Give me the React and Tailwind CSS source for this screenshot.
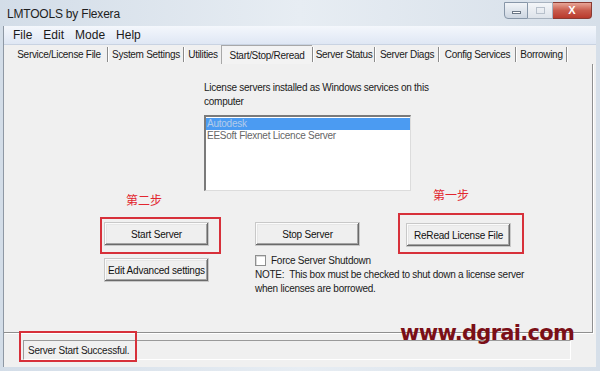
import React from 'react';

const TABS = [
  { label: 'Service/License File', w: 'w-[96px]' },
  { label: 'System Settings', w: 'w-[74px]' },
  { label: 'Utilities', w: 'w-[36px]', noSep: true },
  { label: 'Start/Stop/Reread', w: 'w-[91px]', active: true },
  { label: 'Server Status', w: 'w-[60px]' },
  { label: 'Server Diags', w: 'w-[62px]' },
  { label: 'Config Services', w: 'w-[75px]' },
  { label: 'Borrowing', w: 'w-[49px]' },
];

const MENU = ['File', 'Edit', 'Mode', 'Help'];

function Button({ children, className = '' }) {
  return (
    <div
      className={`h-[24px] w-[105px] shrink-0 flex items-center justify-center bg-[#efefef] text-[10px] tracking-[-0.2px] text-[#111] shadow-[inset_-1px_-1px_#6a6a6a,inset_1px_1px_#fbfbfb,inset_-2px_-2px_#a3a3a3,inset_2px_2px_#e6e6e6] border border-[#c8c8c8] ${className}`}
    >
      {children}
    </div>
  );
}

export default function App() {
  return (
    <div className="w-[600px] h-[371px] overflow-hidden relative flex flex-col bg-gradient-to-r from-[#d3dde8] via-[#e7edf3] to-[#d6dfe9] font-['Liberation_Sans',Arial,sans-serif] text-[#1a1a1a]">
      {/* Title bar */}
      <div className="h-[26px] shrink-0 flex items-start">
        <span className="ml-[7px] mt-[5px] text-[12px] tracking-[-0.2px] text-[#1e1e1e]">LMTOOLS by Flexera</span>
        <div className="ml-auto mr-[8px] mt-[2px] flex">
          <div className="w-[24px] h-[17px] rounded-bl-[4px] border border-[#8796a8] bg-gradient-to-b from-[#f1f4f8] to-[#cdd6e1] flex items-center justify-center">
            <div className="w-[9px] h-[3px] border border-[#6b7786] bg-white mt-[4px]" />
          </div>
          <div className="w-[25px] h-[17px] border-y border-r border-[#a7b2bf] bg-gradient-to-b from-[#f4f6f9] to-[#dde3ea] flex items-center justify-center">
            <div className="w-[9px] h-[7px] border border-[#b7c0cb]" />
          </div>
          <div className="w-[39px] h-[17px] rounded-br-[4px] border-y border-r border-[#8a3a32] bg-gradient-to-b from-[#e7a597] via-[#c85b4c] to-[#b9392c] flex items-center justify-center">
            <span className="text-white text-[11px] font-bold leading-none">X</span>
          </div>
        </div>
      </div>

      {/* Body */}
      <div className="flex-1 flex pl-[3px] pr-[4px]">
        <div className="flex-1 flex flex-col bg-[#f0f0f0] border-l border-[#8e98a4] relative">
          {/* Menu bar */}
          <div className="h-[19px] shrink-0 flex items-center pl-[9px] gap-[11px] text-[12px] bg-gradient-to-b from-[#f4f7fc] to-[#dfe7f4] border-b border-[#c9d3e2]">
            {MENU.map((m) => (
              <span key={m}>{m}</span>
            ))}
          </div>

          {/* Tabs */}
          <div className="h-[19px] shrink-0 flex items-stretch pl-[7px] text-[10px] tracking-[-0.3px]">
            {TABS.map((t) => (
              <React.Fragment key={t.label}>
                <div
                  className={`${t.w} flex items-center justify-center ${t.active ? 'border-t border-l border-[#a8a8a8] bg-[#f3f3f3]' : ''}`}
                >
                  {t.label}
                </div>
                {!t.noSep && (
                  <div className="flex my-[2px]">
                    <div className="w-px bg-[#8a8a8a]" />
                    <div className="w-px bg-white" />
                  </div>
                )}
              </React.Fragment>
            ))}
          </div>

          {/* Tab page */}
          <div className="h-[269px] shrink-0 mr-[3px] border-r border-b border-[#8f8f8f] shadow-[1px_1px_#ffffff] flex flex-col text-[10px] tracking-[-0.25px]">
            <div className="ml-[200px] mt-[17px] w-[230px] leading-[14px]">
              License servers installed as Windows services on this computer
            </div>
            <div className="ml-[200px] mt-[6px] w-[207px] h-[76px] bg-white border-t-2 border-l-2 border-t-[#7a7a7a] border-l-[#7a7a7a] border-r border-b border-r-[#dcdcdc] border-b-[#dcdcdc] pt-px leading-[12px]">
              <div className="h-[12px] bg-[#4b9bf2] text-[#b3cbea] pl-[1px]">Autodesk</div>
              <div className="h-[12px] text-[#666] pl-[1px]">EESoft Flexnet Licence Server</div>
            </div>

            <div className="flex items-start mt-[-6px]">
              {/* Left column */}
              <div className="ml-[96px] w-[121px] flex flex-col">
                <span className="ml-[26px] mt-[8px] h-[14px] leading-[14px] text-[12px] text-[#e2262f] font-['Noto_Sans_CJK_SC',sans-serif] tracking-normal">第二步</span>
                <div className="mt-[10px] h-[37px] border-2 border-[#d7303a] pl-[2px] pt-[3px]">
                  <Button>Start Server</Button>
                </div>
                <Button className="mt-[4px] ml-[4px]">Edit Advanced settings</Button>
              </div>

              {/* Middle column */}
              <div className="ml-[34px] w-[105px] flex flex-col">
                <Button className="mt-[37px]">Stop Server</Button>
                <div className="mt-[8px] flex items-center h-[12px]">
                  <div className="w-[11px] h-[11px] shrink-0 bg-white border border-[#8e8f8f] shadow-[inset_1px_1px_#d8d8d8]" />
                  <span className="ml-[5px] whitespace-nowrap">Force Server Shutdown</span>
                </div>
                <div className="mt-[2px] leading-[14px] whitespace-nowrap">
                  <div>NOTE:&nbsp; This box must be checked to shut down a license server</div>
                  <div>when licenses are borrowed.</div>
                </div>
              </div>

              {/* Right column */}
              <div className="ml-[38px] w-[126px] flex flex-col">
                <span className="ml-[35px] mt-[3px] h-[14px] leading-[14px] text-[12px] text-[#e2262f] font-['Noto_Sans_CJK_SC',sans-serif] tracking-normal">第一步</span>
                <div className="mt-[11px] h-[41px] border-2 border-[#d7303a] pl-[6px] pt-[8px]">
                  <Button>ReRead License File</Button>
                </div>
              </div>
            </div>
          </div>

          {/* Status bar */}
          <div className="flex-1 flex items-start">
            <div className="ml-[19px] mt-[7px] w-[548px] h-[20px] border-t border-l border-[#9a9a9a] border-r border-b border-r-white border-b-white flex items-center pl-[4px] text-[10px] tracking-[-0.25px]">
              Server Start Successful.
            </div>
          </div>
        </div>
      </div>
      <div className="h-[4px] shrink-0" />

      {/* Annotation overlays */}
      <div className="absolute left-[19px] top-[331px] w-[118px] h-[31px] border-2 border-[#d7303a]" />
      <div className="absolute left-[400px] top-[319px] text-[21px] leading-[28px] font-bold tracking-[-0.7px] text-[#7b0f17] font-['DejaVu_Sans',sans-serif]">
        www.dgrai.com
      </div>
    </div>
  );
}
